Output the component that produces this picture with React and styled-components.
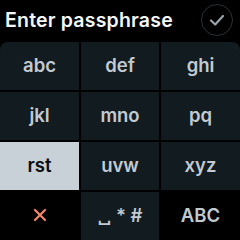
import React from 'react'
import styled, { createGlobalStyle } from 'styled-components'

const GlobalStyle = createGlobalStyle`
  html, body {
    margin: 0;
    padding: 0;
    background: #000;
  }
  body {
    font-family: Inter, 'Noto Sans', sans-serif;
  }
`

const Screen = styled.div`
  width: 240px;
  height: 240px;
  background: #000;
  display: flex;
  flex-direction: column;
  overflow: hidden;
`

const Header = styled.div`
  height: 42px;
  display: flex;
  align-items: center;
  justify-content: space-between;
  padding: 0 7px 2px 5px;
  box-sizing: border-box;
`

const Title = styled.h1`
  margin: 0;
  font-size: 19.5px;
  font-weight: 600;
  color: #f4f6f8;
  letter-spacing: 0.2px;
  white-space: nowrap;
`

const CheckButton = styled.div`
  flex-shrink: 0;
  width: 32px;
  height: 32px;
  box-sizing: border-box;
  border-radius: 50%;
  border: 1.5px solid #283236;
  display: flex;
  align-items: center;
  justify-content: center;
`

const Keypad = styled.div`
  flex: 1;
  display: grid;
  grid-template-columns: 79px 78px 79px;
  grid-template-rows: repeat(4, 1fr);
  gap: 2px;
  border-radius: 8px 8px 0 0;
  overflow: hidden;
`

const Key = styled.div`
  display: flex;
  align-items: center;
  justify-content: center;
  font-size: 18.5px;
  font-weight: 600;
  padding-bottom: 2px;
  background: ${p => (p.$active ? '#c9d1d8' : p.$bare ? '#000' : '#121b20')};
  color: ${p => (p.$active ? '#0a0d0f' : '#c2cad1')};
`

const CloseIcon = () => (
  <svg width="14" height="14" viewBox="0 0 14 14">
    <path d="M2 2 L12 12 M12 2 L2 12" stroke="#f2876a" strokeWidth="2.2" strokeLinecap="round" />
  </svg>
)

const CheckIcon = () => (
  <svg width="18" height="18" viewBox="0 0 18 18">
    <path d="M3 9.5 L7.2 13.5 L15 5" fill="none" stroke="#9aa3a9" strokeWidth="2.2" strokeLinecap="round" strokeLinejoin="round" />
  </svg>
)

const keys = ['abc', 'def', 'ghi', 'jkl', 'mno', 'pq', 'rst', 'uvw', 'xyz']

export default function App() {
  return (
    <Screen>
      <GlobalStyle />
      <Header>
        <Title>Enter passphrase</Title>
        <CheckButton>
          <CheckIcon />
        </CheckButton>
      </Header>
      <Keypad>
        {keys.map(k => (
          <Key key={k} $active={k === 'rst'}>{k}</Key>
        ))}
        <Key $bare><CloseIcon /></Key>
        <Key>␣ * #</Key>
        <Key $bare>ABC</Key>
      </Keypad>
    </Screen>
  )
}
